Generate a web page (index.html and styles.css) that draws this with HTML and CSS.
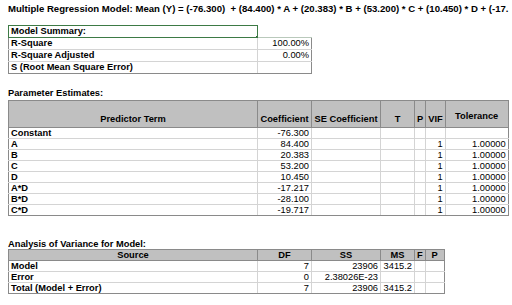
FILE: index.html
```html
<!DOCTYPE html>
<html>
<head>
<meta charset="utf-8">
<link rel="stylesheet" href="styles.css">
</head>
<body>
<div class="page">
  <div class="title">Multiple Regression Model: Mean (Y) = (-76.300) &nbsp;+ (84.400) * A + (20.383) * B + (53.200) * C + (10.450) * D + (-17.</div>

  <table class="tbl summary">
    <colgroup><col class="c-label"><col class="c-coef"></colgroup>
    <tr><td class="lbl sel">Model Summary:<span class="handle"></span></td><td class="blank"></td></tr>
    <tr><td class="lbl">R-Square</td><td class="num">100.00%</td></tr>
    <tr><td class="lbl">R-Square Adjusted</td><td class="num">0.00%</td></tr>
    <tr class="last"><td class="lbl">S (Root Mean Square Error)</td><td class="num"></td></tr>
  </table>

  <div class="section">Parameter Estimates:</div>
  <table class="tbl params">
    <colgroup><col class="c-label"><col class="c-coef"><col class="c-se"><col class="c-t"><col class="c-p"><col class="c-vif"><col class="c-tol"></colgroup>
    <tr class="head tall"><th>Predictor Term</th><th>Coefficient</th><th>SE Coefficient</th><th>T</th><th>P</th><th>VIF</th><th class="tol">Tolerance</th></tr>
    <tr><td class="lbl">Constant</td><td class="num">-76.300</td><td></td><td></td><td></td><td></td><td></td></tr>
    <tr><td class="lbl">A</td><td class="num">84.400</td><td></td><td></td><td></td><td class="num">1</td><td class="num">1.00000</td></tr>
    <tr><td class="lbl">B</td><td class="num">20.383</td><td></td><td></td><td></td><td class="num">1</td><td class="num">1.00000</td></tr>
    <tr><td class="lbl">C</td><td class="num">53.200</td><td></td><td></td><td></td><td class="num">1</td><td class="num">1.00000</td></tr>
    <tr><td class="lbl">D</td><td class="num">10.450</td><td></td><td></td><td></td><td class="num">1</td><td class="num">1.00000</td></tr>
    <tr><td class="lbl">A*D</td><td class="num">-17.217</td><td></td><td></td><td></td><td class="num">1</td><td class="num">1.00000</td></tr>
    <tr><td class="lbl">B*D</td><td class="num">-28.100</td><td></td><td></td><td></td><td class="num">1</td><td class="num">1.00000</td></tr>
    <tr class="last"><td class="lbl">C*D</td><td class="num">-19.717</td><td></td><td></td><td></td><td class="num">1</td><td class="num">1.00000</td></tr>
  </table>

  <div class="section anova-title">Analysis of Variance for Model:</div>
  <table class="tbl anova">
    <colgroup><col class="c-label"><col class="c-coef"><col class="c-se"><col class="c-t"><col class="c-p"><col class="c-vif"></colgroup>
    <tr class="head"><th>Source</th><th>DF</th><th>SS</th><th>MS</th><th>F</th><th>P</th></tr>
    <tr><td class="lbl">Model</td><td class="num">7</td><td class="num">23906</td><td class="num">3415.2</td><td></td><td></td></tr>
    <tr><td class="lbl">Error</td><td class="num">0</td><td class="num">2.38026E-23</td><td></td><td></td><td></td></tr>
    <tr class="last"><td class="lbl">Total (Model + Error)</td><td class="num">7</td><td class="num">23906</td><td class="num">3415.2</td><td></td><td></td></tr>
  </table>
</div>
</body>
</html>
```

FILE: styles.css
```css
html, body {
  margin: 0;
  padding: 0;
  background: #ffffff;
  overflow: hidden;
}
body {
  font-family: "Liberation Sans", Arial, sans-serif;
  font-size: 9.3px;
  color: #000;
}
.page {
  padding: 3px 0 0 8px;
}
.title {
  font-weight: bold;
  font-size: 9.6px;
  white-space: nowrap;
  overflow: hidden;
  height: 11px;
  line-height: 11px;
  margin-bottom: 11px;
}
.tbl {
  border-collapse: collapse;
  table-layout: fixed;
}
.tbl td, .tbl th {
  padding: 0 2px;
  height: 10px;
  line-height: 10px;
  white-space: nowrap;
  overflow: hidden;
  border: 1px solid #d4d4d4;
  border-top: none;
}
.tbl td:first-child, .tbl th:first-child {
  border-left: 1px solid #8a8a8a;
}
.tbl td:nth-child(2), .tbl th:nth-child(2) {
  border-left: 1px solid #8a8a8a;
}
.tbl td:last-child, .tbl th:last-child {
  border-right: 1px solid #8a8a8a;
}
.tbl tr.last td {
  border-bottom: 1px solid #8a8a8a;
}
.c-label { width: 249px; }
.c-coef { width: 54px; }
.c-se { width: 69px; }
.c-t { width: 34px; }
.c-p { width: 10px; }
.c-vif { width: 19px; }
.c-tol { width: 63px; }

.lbl { font-weight: bold; text-align: left; }
.num { text-align: right; font-weight: normal; }

.summary td { height: 11px; line-height: 11px; }
.summary td.sel {
  position: relative;
  border: 1px solid #3d7a45;
}
.summary td.blank {
  border: none;
  border-left: 1px solid #3d7a45;
  border-bottom: 1px solid #b9c9bb;
}
.summary .handle {
  position: absolute;
  right: -2px;
  bottom: -2px;
  width: 3px;
  height: 3px;
  background: #2e6b36;
}

.section {
  font-weight: bold;
  margin-top: 14px;
  height: 11px;
  line-height: 11px;
  margin-bottom: 1px;
}
.anova-title {
  margin-top: 24px;
  margin-bottom: 0;
  height: 9px;
  line-height: 9px;
}

.tbl tr.head th {
  background: #c0c0c0;
  font-weight: bold;
  text-align: center;
  border: 1px solid #8a8a8a;
  vertical-align: bottom;
}
.tbl tr.tall th {
  height: 20px;
  padding-bottom: 3px;
}
.tbl tr.tall th.tol { padding-bottom: 6px; }
```
